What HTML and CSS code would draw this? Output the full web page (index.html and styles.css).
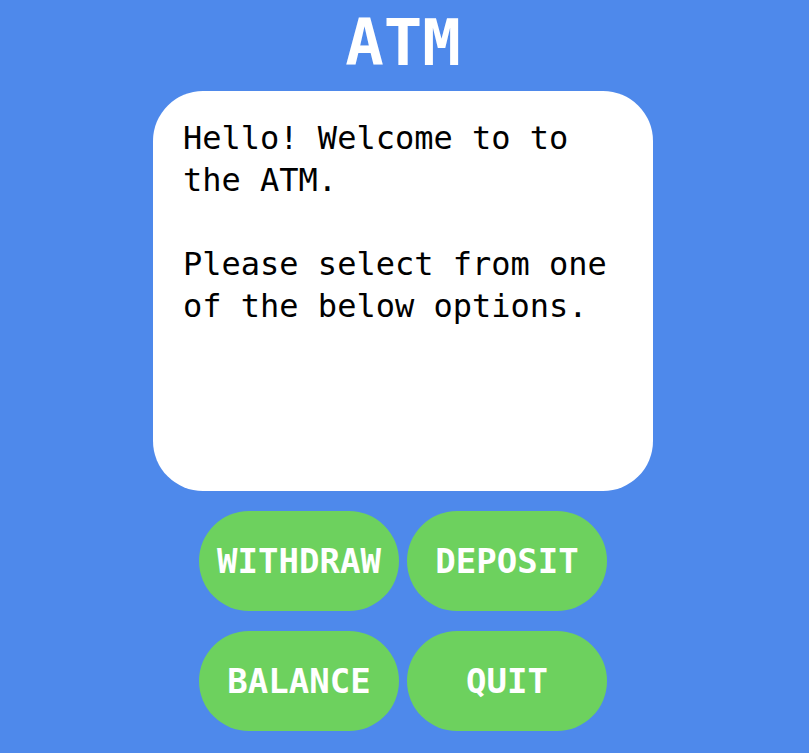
FILE: index.html
```html
<!DOCTYPE html>
<html lang="en">
<head>
<meta charset="utf-8">
<title>ATM</title>
<link rel="stylesheet" href="styles.css">
</head>
<body>
<main class="app">
  <h1 class="title">ATM</h1>
  <section class="screen">
    <p class="screen-text">Hello! Welcome to to the ATM.</p>
    <p class="screen-text">Please select from one of the below options.</p>
  </section>
  <div class="buttons">
    <button class="btn">WITHDRAW</button>
    <button class="btn">DEPOSIT</button>
    <button class="btn">BALANCE</button>
    <button class="btn">QUIT</button>
  </div>
</main>
</body>
</html>
```

FILE: styles.css
```css
html, body {
  margin: 0;
  padding: 0;
}
body {
  background: #4e89eb;
  font-family: "DejaVu Sans Mono", "Liberation Mono", monospace;
  height: 753px;
  overflow: hidden;
}
.app {
  display: flex;
  flex-direction: column;
  align-items: center;
  padding: 4px 3px 0 0;
}
.title {
  margin: 0 0 8px 0;
  font-size: 64px;
  line-height: 79px;
  font-weight: bold;
  color: #ffffff;
  letter-spacing: 0;
}
.screen {
  box-sizing: border-box;
  width: 500px;
  height: 400px;
  background: #ffffff;
  border-radius: 50px;
  padding: 26px 30px;
}
.screen-text {
  margin: 0 0 42px 0;
  font-size: 32px;
  line-height: 42px;
  color: #000000;
}
.buttons {
  display: grid;
  grid-template-columns: 200px 200px;
  column-gap: 8px;
  row-gap: 20px;
  margin-top: 20px;
}
.btn {
  width: 200px;
  height: 100px;
  border: none;
  border-radius: 50px;
  background: #6dd15e;
  color: #ffffff;
  font-family: "DejaVu Sans Mono", "Liberation Mono", monospace;
  font-weight: bold;
  font-size: 34px;
  padding: 0;
}
```
